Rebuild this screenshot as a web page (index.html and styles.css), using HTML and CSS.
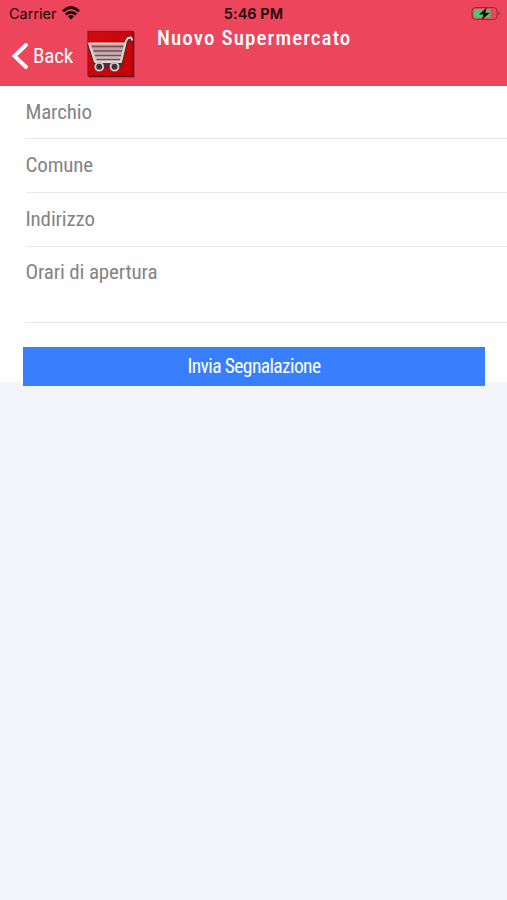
FILE: index.html
```html
<!DOCTYPE html>
<html lang="it">
<head>
<meta charset="utf-8">
<title>Nuovo Supermercato</title>
<link rel="stylesheet" href="styles.css">
</head>
<body>
<header class="header">
  <div class="status">
    <div class="carrier"><span>Carrier</span>
      <svg class="wifi" viewBox="0 0 18 14" width="18" height="14"><g fill="none" stroke="#1c0509" stroke-width="2.9"><path d="M1 5.2Q9-2.2 17 5.2"/><path d="M3.8 8.5Q9 3.8 14.2 8.5"/></g><path d="M6 10.4Q9 7.8 12 10.4L9 13.4Z" fill="#1c0509"/></svg>
    </div>
    <time class="clock">5:46 PM</time>
    <svg class="battery" viewBox="0 0 30 16" width="30" height="16"><rect x="1" y="1.5" width="25" height="12" rx="3.5" fill="none" stroke="#912b3a"/><rect x="3" y="3.3" width="16.5" height="8.5" rx="1.5" fill="#52c66b"/><path d="M27.5 5.3Q30 7.5 27.5 9.7Z" fill="#912b3a"/><path d="M15.8 1.5 8 8.4H12.5L10.8 14 18.8 6.7H14.2Z" fill="#160306"/></svg>
  </div>
  <nav class="nav">
    <div class="back">
      <svg class="chevron" viewBox="0 0 18 28" width="18" height="28"><path d="M15 3 3.5 14 15 25" fill="none" stroke="#fff" stroke-width="3.9" stroke-linecap="round"/></svg>
      <span class="condensed back-label">Back</span>
    </div>
    <svg class="cart" viewBox="0 0 50 50" width="50" height="50">
      <defs>
        <linearGradient id="red" x2="1" y2="1"><stop stop-color="#d20b12"/><stop offset="1" stop-color="#c30006"/></linearGradient>
        <linearGradient id="steel" x2="0" y2="1"><stop stop-color="#a99797"/><stop offset="1" stop-color="#d8cccc"/></linearGradient>
      </defs>
      <path d="M2 2H48V48H2Z" fill="url(#red)"/><path d="M2 47V2.5H47" fill="none" stroke="#a7101a" stroke-width="1.3"/><path d="M3 47.5H47.5V3" fill="none" stroke="#5d1015" stroke-width="1.6"/>
      <path d="M46.5 11 42 9.5 40 13 35 32.5 34 37H10L9 32 3 15" fill="none" stroke="#5c2a2e" stroke-width="4.6"/>
      <path d="M2.5 14H40L35 33H9Z" fill="url(#steel)"/>
      <path d="M6 17.5H37M7.5 22H36M9 26.5H35M10.5 30.5H34" stroke="#84474c" stroke-width="1.3"/>
      <path d="M46.5 11.5 45 8.5 42 9 40 12 35 33H9L3 14.5H39" fill="none" stroke="#e0d5d3" stroke-width="1.9" stroke-linejoin="round"/>
      <g fill="#3f3338" stroke="#cfc3c3" stroke-width="2"><circle cx="13.2" cy="37.7" r="3.9"/><circle cx="28.5" cy="37.7" r="3.9"/></g>
    </svg>
    <h1 class="condensed title">Nuovo Supermercato</h1>
  </nav>
</header>
<main class="form">
  <div class="field"><span class="condensed">Marchio</span></div>
  <div class="field"><span class="condensed">Comune</span></div>
  <div class="field"><span class="condensed">Indirizzo</span></div>
  <div class="field tall"><span class="condensed">Orari di apertura</span></div>
  <button class="submit"><span class="condensed submit-label">Invia Segnalazione</span></button>
</main>
</body>
</html>
```
FILE: styles.css
```css
* { box-sizing: border-box; }
body { margin: 0; min-height: 900px; background: #f3f5fa; font-family: Roboto, sans-serif; }
.header { height: 86px; background: #ed465c; overflow: hidden; }
.status { height: 27px; display: grid; grid-template-columns: 1fr auto 1fr; align-items: center; padding: 0 6px 0 9px; color: #1c0509; font: 14.5px/27px Inter, sans-serif; }
.carrier { display: flex; align-items: center; gap: 5px; }
.wifi { margin-top: -2px; }
.clock { font-weight: 600; margin-left: -3px; letter-spacing: .05px; }
.battery { justify-self: end; }
.nav { height: 59px; display: flex; align-items: flex-start; padding-left: 11px; color: #fff; }
.back { width: 75px; height: 58px; display: flex; align-items: center; gap: 4px; }
.condensed { font-family: "Roboto Condensed", Roboto, sans-serif; font-stretch: 75%; white-space: nowrap; }
.back-label { font-size: 21px; letter-spacing: -.15px; }
.cart { margin-top: 2px; flex: none; }
.title { margin: -1px 0 0 21px; font-size: 21px; line-height: 24px; font-weight: 500; letter-spacing: 1.1px; }
.form { height: 296px; background: #fff; display: flex; flex-direction: column; }
.field { flex: none; height: 54px; margin-left: 25.5px; border-bottom: 1px solid #e8e8e8; color: #848484; font-size: 21px; line-height: 53px; letter-spacing: -.15px; }
.field:first-child { height: 53px; line-height: 53px; }
.tall { height: 76px; line-height: 50px; }
.submit { flex: none; width: 462px; height: 39px; margin: 24px 0 0 23px; padding: 0; border: 0; background: #387fff; color: #fff; }
.submit-label { font-size: 19.5px; line-height: 39px; letter-spacing: -.6px; }
```
